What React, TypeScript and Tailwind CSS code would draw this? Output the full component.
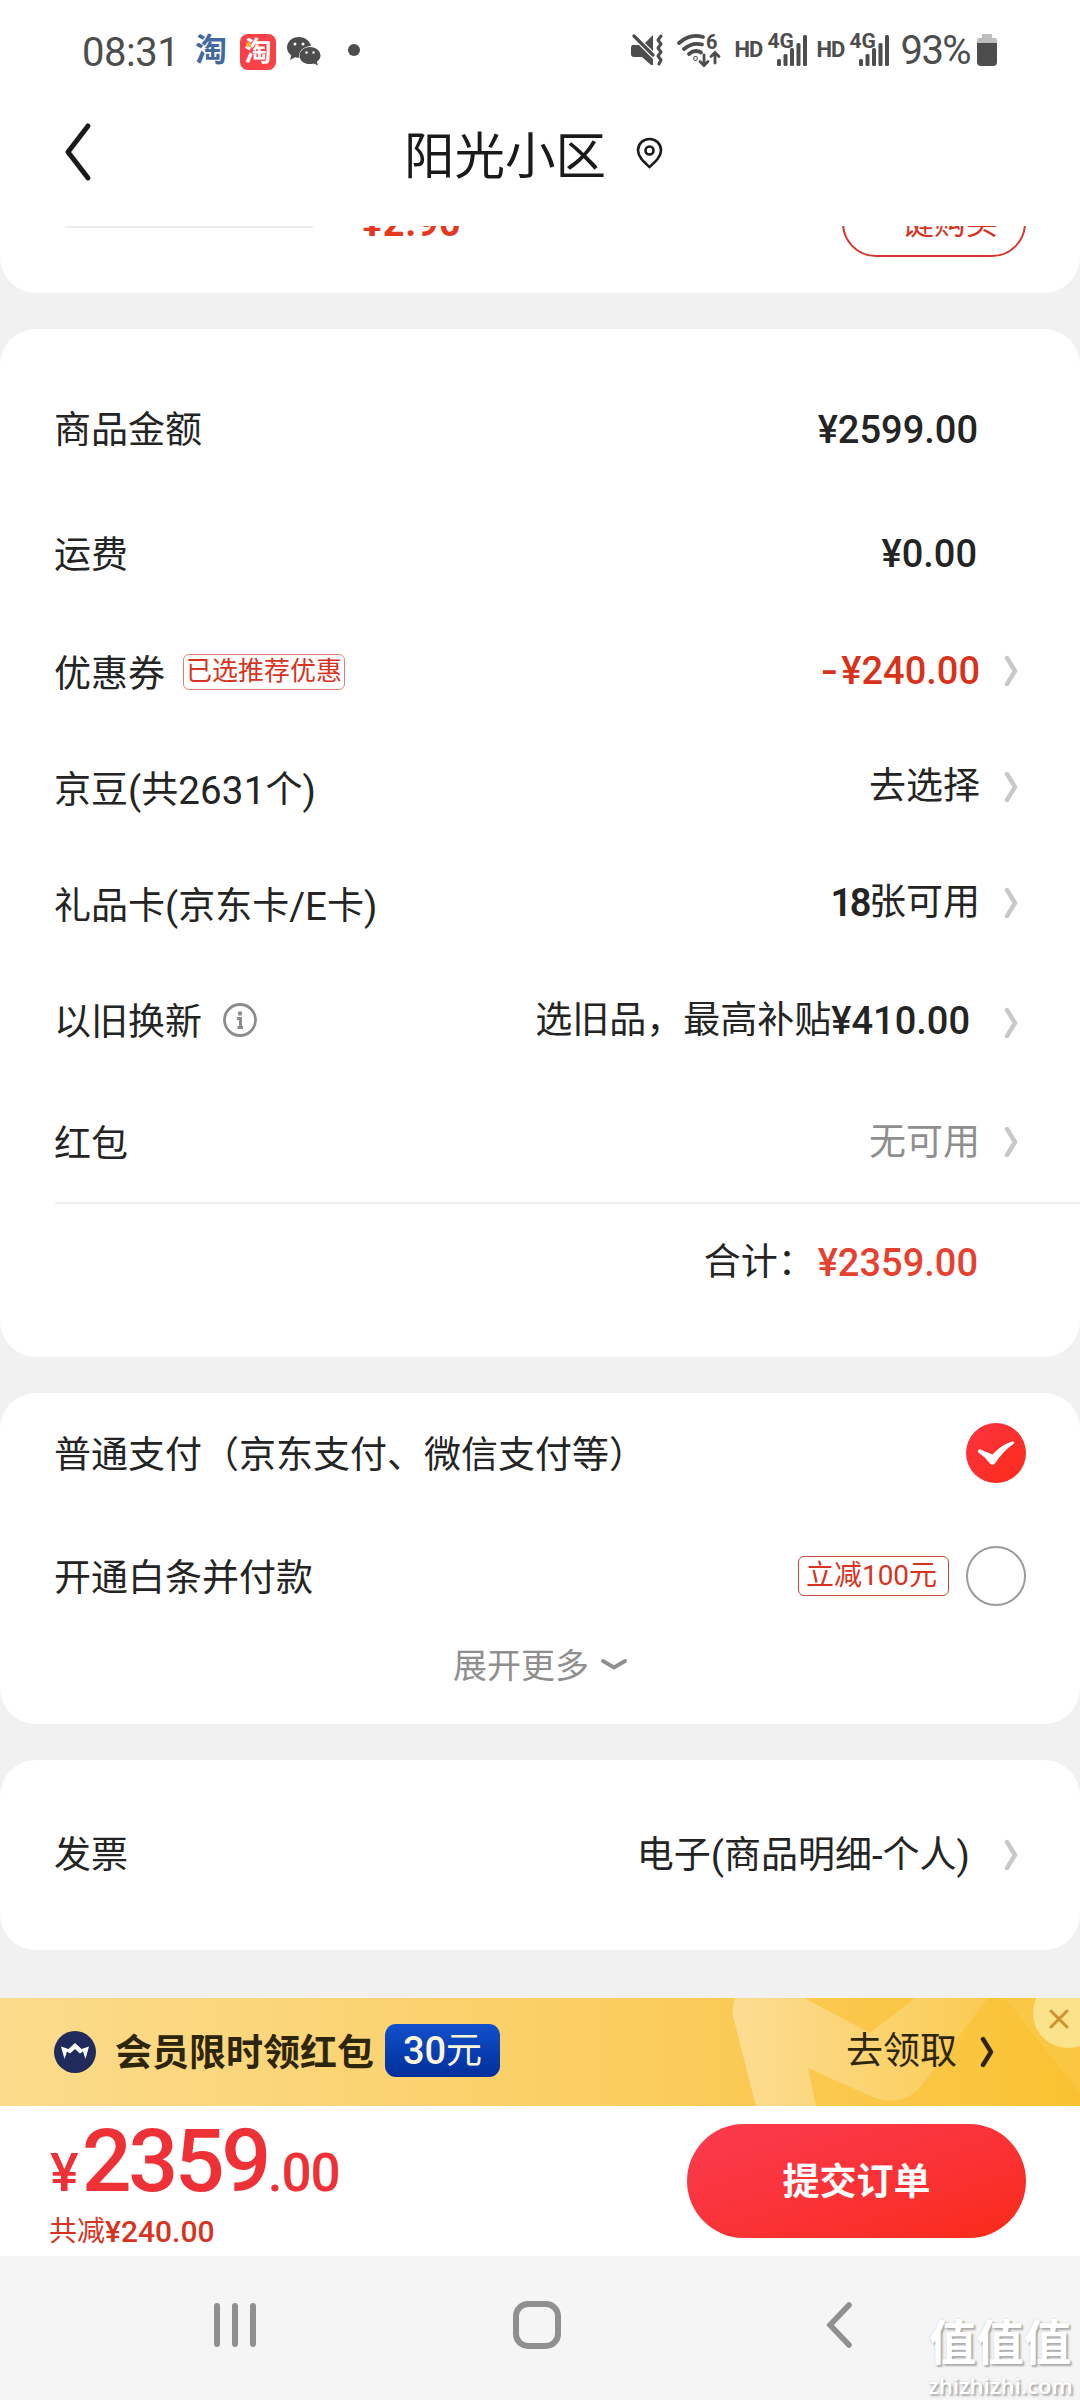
import type { ReactNode } from "react";

function Arrow({ className = "text-[#c8c8c8]" }: { className?: string }) {
  return (
    <svg className={`w-3.5 h-8 shrink-0 ${className}`} viewBox="0 0 14 32" fill="none">
      <path d="M3 3 L11 16 L3 29" stroke="currentColor" strokeWidth="4.400" strokeLinecap="round" strokeLinejoin="round" />
    </svg>
  );
}

function Signal() {
  return (
    <div className="relative flex w-[74px] h-8">
      <span className="mt-[4px] h-6 text-[22px] leading-6 font-bold tracking-[-1px]">HD</span>
      <span className="absolute left-[33px] -top-[3px] text-[21px] leading-5 font-bold">4G</span>
      <svg className="absolute left-[42px] top-0 w-8 h-8" viewBox="0 0 32 32" fill="#4d4d4d">
        <rect x="0" y="25" width="4" height="7" rx="1.5" />
        <rect x="6.5" y="20" width="4" height="12" rx="1.5" />
        <rect x="13" y="14" width="4" height="18" rx="1.5" />
        <rect x="19.5" y="9" width="4" height="23" rx="1.5" />
        <rect x="26" y="1" width="4" height="31" rx="1.5" />
      </svg>
    </div>
  );
}

function StatusBar() {
  return (
    <div className="flex h-[103px] items-start pl-[82px] pr-[83px] pt-[34px] text-[#4d4d4d]">
      <span className="-mt-[3px] w-[113px] text-[40px] leading-[44px] font-normal tracking-[-0.500px]">08:31</span>
      <span className="w-[45px] text-[32px] leading-8 font-bold text-[#44699f]">淘</span>
      <span className="relative flex size-9 items-center justify-center rounded-lg bg-[#fb4148] text-[27px] font-bold text-white">
        淘
        <span className="absolute left-[6px] top-[8px] size-[5px] rounded-full bg-[#ffb01f]" />
      </span>
      <svg className="ml-[11px] mt-[3px] w-[34px] h-7 overflow-visible" viewBox="0 0 34 28" fill="#4d4d4d">
        <path d="M12 0C5 0 0 4.800 0 10.500c0 3.300 1.700 6 4.300 7.900L3 23l5.200-2.700c1.500.4 2.600.5 4 .5C11 14 17 9 24 9 23 4 18 0 12 0Z" />
        <path d="M23 10c-6 0-10.500 4-10.500 8.700S17 27 23 27c1.300 0 2.500-.2 3.600-.6L31 28.500l-1.200-3.700c2.300-1.600 3.700-3.700 3.700-6.100C33.500 14 29 10 23 10Z" />
        <g fill="#fff">
          <circle cx="8" cy="7" r="1.500" /><circle cx="16" cy="7" r="1.500" />
          <circle cx="19.500" cy="15.500" r="1.200" /><circle cx="26.500" cy="15.500" r="1.200" />
        </g>
      </svg>
      <span className="ml-[27px] mt-[10px] size-3 rounded-full bg-[#4d4d4d]" />

      <div className="ml-auto flex">
        <svg className="w-8 h-8" viewBox="0 0 32 32" fill="#4d4d4d">
          <path d="M1 11 H8 L22 25 V31 L20 31 L11 23 H3 Q0 23 0 20 V13Z" />
          <path d="M22 1 V17 L14 9Z" />
          <path d="M3 2 L22 21" stroke="#4d4d4d" strokeWidth="3.200" strokeLinecap="round" />
          <path d="M30 2 L27 6 L30 10 L27 14 L30 18 L27 22 L30 26 L28 30" fill="none" stroke="#4d4d4d" strokeWidth="3" strokeLinecap="round" strokeLinejoin="round" />
        </svg>
        <svg className="ml-[14px] w-[44px] h-[34px] overflow-visible" viewBox="0 0 44 34" fill="none" stroke="#4d4d4d" strokeWidth="3.800" strokeLinecap="round">
          <path d="M2 9 Q13-1 26 3" />
          <path d="M7 15 Q15 8 25 10.500" />
          <path d="M12 20 Q18 15 24 18.500" />
          <circle cx="18.500" cy="24.500" r="0.500" />
          <path d="M27 21 V31 M23 27.500 L27 31.500 L31 27.500 M38 29 V18.500 M34 22.500 L38 18.500 L42 22.500" strokeWidth="2.800" />
          <text x="29" y="14.500" fill="#4d4d4d" stroke="none" fontSize="20" fontWeight="700">6</text>
        </svg>
        <span className="ml-[14px]"><Signal /></span>
        <span className="ml-2"><Signal /></span>
        <span className="-mt-[5px] ml-[10px] text-[40px] leading-[44px] font-normal tracking-[-1.600px]">93%</span>
        <svg className="ml-[7px] w-5 h-8" viewBox="0 0 20 32">
          <path d="M5 0 h10 v4 h3 q2 0 2 3 v5 h-20 v-5 q0-3 2-3 h3z" fill="#bdbdbd" />
          <path d="M0 9 h20 v19 q0 4-4 4 h-12 q-4 0-4-4z" fill="#4d4d4d" />
        </svg>
      </div>
    </div>
  );
}

function Header() {
  return (
    <div className="relative flex h-[123px] justify-center">
      <svg className="absolute left-[62px] top-[18px] w-8 h-[62px]" viewBox="0 0 32 62" fill="none">
        <path d="M26 5 L6 31 L26 57" stroke="#1a1a1a" strokeWidth="5" strokeLinecap="round" strokeLinejoin="round" />
      </svg>
      <h1 className="-ml-[13px] mt-[18px] text-[50.500px] leading-[72px] text-[#1a1a1a]">阳光小区</h1>
      <svg className="ml-[30px] mt-[34px] w-[27px] h-8" viewBox="0 0 27 32" fill="none" stroke="#1a1a1a" strokeWidth="2.600">
        <path d="M13.500 2 C7 2 2 7 2 13.300 C2 20 8 25 13.500 30 C19 25 25 20 25 13.300 C25 7 20 2 13.500 2Z" />
        <circle cx="13.500" cy="13.500" r="4" />
      </svg>
    </div>
  );
}

type RowProps = {
  label: ReactNode;
  value: ReactNode;
  height: string;
  arrow?: boolean;
  valueClass?: string;
  arrowClass?: string;
};

function Row({ label, value, height, arrow, valueClass = "", arrowClass = "" }: RowProps) {
  return (
    <div className={`flex items-center pl-[54px] pr-[62px] ${height}`}>
      <div className="flex items-center pt-[4px]">{label}</div>
      <div className={`ml-auto flex items-center ${valueClass}`}>{value}</div>
      <div className={`flex w-[38px] justify-end ${arrowClass}`}>{arrow && <Arrow />}</div>
    </div>
  );
}

function Price({ children, className = "" }: { children: ReactNode; className?: string }) {
  return <span className={`text-[38px] font-medium ${className}`}>{children}</span>;
}

function Summary() {
  return (
    <section className="mt-9 h-[1028px] rounded-[36px] bg-white pt-[38px]">
      <Row label="商品金额" value={<Price>¥2599.00</Price>} height="h-[124px]" valueClass="pr-[2px] pt-px" />
      <Row label="运费" value={<Price>¥0.00</Price>} height="h-[125px]" valueClass="pr-[3px] pt-px" />
      <Row
        label={
          <>
            优惠券
            <span className="-mt-[7px] ml-[18px] flex h-9 w-[162px] items-center justify-center rounded-md border border-[#d98078] pb-0.5 text-[26px] text-[#d8331f]">
              已选推荐优惠
            </span>
          </>
        }
        value={
          <Price className="flex items-center text-[#d8331a]">
            <span className="inline-block scale-x-130 mr-[5px]">-</span>¥240.00
          </Price>
        }
        height="h-[114px]"
        valueClass="-mt-1"
        arrowClass="-mt-1"
        arrow
      />
      <Row
        label={<>京豆<span className="text-[38.500px]">(</span>共<span className="text-[38.500px] tracking-[0.200px]">2631</span>个<span className="text-[38.500px]">)</span></>}
        value="去选择"
        height="h-[117px]"
        valueClass="-mt-1"
        arrowClass="-mt-1"
        arrow
      />
      <Row
        label={<>礼品卡<span className="text-[38.500px]">(</span>京东卡<span className="text-[38.500px]">/E</span>卡<span className="text-[38.500px]">)</span></>}
        value={<><Price className="tracking-[-2.500px] font-semibold">18</Price>张可用</>}
        height="h-[115px]"
        valueClass="-mt-[3px]"
        arrowClass="-mt-1"
        arrow
      />
      <Row
        label={
          <>
            以旧换新
            <svg className="ml-[20px] -mt-[6px] size-9" viewBox="0 0 36 36" fill="none" stroke="#8c8c8c">
              <circle cx="18" cy="18" r="15.500" strokeWidth="2.800" />
              <path d="M15 16.500 H18.500 V25 M15.500 25.500 H21" strokeWidth="3" />
              <circle cx="18" cy="11.500" r="1" strokeWidth="2.500" />
            </svg>
          </>
        }
        value={<>选旧品，最高补贴<Price>¥410.00</Price></>}
        height="h-[117px]"
        valueClass="mr-[10px]"
        arrowClass="mt-[5px]"
        arrow
      />
      <Row
        label={<span className="pt-1">红包</span>}
        value={<span className="text-[#8f8f8f]">无可用</span>}
        height="h-[123px]"
        valueClass="mt-1"
        arrowClass="mt-[3px]"
        arrow
      />
      <div className="ml-[55px] h-0.5 bg-[#f0f0f0]" />
      <div className="flex h-[118px] items-center justify-end pr-[102px]">
        合计：<Price className="ml-[3px] text-[#e8402f]">¥2359.00</Price>
      </div>
    </section>
  );
}

function Payment() {
  return (
    <section className="mt-9 h-[331px] rounded-[36px] bg-white">
      <div className="flex h-[121px] items-center pl-[54px] pr-[54px]">
        <span className="pt-1">普通支付（京东支付、微信支付等）</span>
        <svg className="-mt-px ml-auto size-[60px]" viewBox="0 0 60 60">
          <defs>
            <linearGradient id="tick" x1="0" x2="1" y1="0" y2="1">
              <stop offset="0" stopColor="#fb3441" />
              <stop offset="1" stopColor="#fc2b18" />
            </linearGradient>
          </defs>
          <circle cx="30" cy="30" r="30" fill="url(#tick)" />
          <path d="M12 27.500 Q13 25.500 15.500 27 L26.500 31.500 Q35 22 46 18.500 Q49 18 48 20.500 Q37 28 29 40.500 Q26.500 43 24 40.500 Q19 34 12.500 29.500 Q11.500 28.500 12 27.500Z" fill="#fff" />
        </svg>
      </div>
      <div className="flex h-[125px] items-center pl-[54px] pr-[54px]">
        <span className="pt-1">开通白条并付款</span>
        <span className="-mt-[2px] ml-auto flex h-10 w-[151px] items-center justify-center rounded-md border-[1.5px] border-[#d2453a] pr-1 text-[28px] text-[#d8331f]">
          立减100元
        </span>
        <span className="-mt-[2px] ml-[17px] size-[60px] rounded-full border-2 border-[#9b9b9b]" />
      </div>
      <div className="flex h-[52px] items-center justify-center text-[34px] text-[#8f8f8f]">
        <span className="pt-[2px]">展开更多</span>
        <svg className="ml-3 w-[26px] h-3" viewBox="0 0 26 12" fill="none">
          <path d="M2 2 L13 8.500 L24 2" stroke="#8f8f8f" strokeWidth="3.800" strokeLinecap="round" />
        </svg>
      </div>
    </section>
  );
}

function Banner() {
  return (
    <div className="relative mt-12 h-[108px] overflow-hidden bg-linear-to-r from-[#fbdc8c] to-[#fac230]">
      <svg className="absolute right-0 top-0 h-[108px] w-[360px]" viewBox="0 0 360 108">
        <defs>
          <linearGradient id="crown" x1="0" x2="1">
            <stop offset="0" stopColor="#fff" stopOpacity="0.350" />
            <stop offset="0.950" stopColor="#fff" stopOpacity="0.120" />
          </linearGradient>
        </defs>
        <path d="M15 0 H84 L150 35 L195 0 H268 L205 83 Q185 112 150 98 L88 70 L96 108 H36 L13 18 Q12 8 15 0Z" fill="url(#crown)" />
        <path d="M285 0 H360 V95Z" fill="#fff" fillOpacity="0.080" />
      </svg>
      <div className="relative flex h-full items-center pl-[54px] pr-[86px] text-[#2d260d]">
        <svg className="size-[42px]" viewBox="0 0 42 42">
          <circle cx="21" cy="21" r="21" fill="#202b5c" />
          <path d="M7 15.500 L14.500 18 L21 12 L27.500 18 L35 15.500 L31.500 28 L29 20.500 L26 22.500 L21 18 L16 22.500 L13 20.500 L10.500 28Z" fill="#fff" />
        </svg>
        <span className="ml-[19px] pt-1 font-bold">会员限时领红包</span>
        <span className="ml-[11px] -mt-[3px] flex h-[53px] w-[115px] items-center justify-center rounded-[11px] bg-linear-to-b from-[#1250cc] to-[#022f9b] text-[#fbf5d8]">
          <Price>30</Price><span className="text-[36px]">元</span>
        </span>
        <span className="-mt-px ml-auto">去领取</span>
        <Arrow className="ml-[23px] text-[#2d260d]" />
      </div>
      <div className="absolute -right-[23px] -top-5 size-[70px] rounded-full bg-[#fbe38b]" />
      <svg className="absolute right-[11px] top-[11px] size-5" viewBox="0 0 20 20">
        <path d="M2 2 L18 18 M18 2 L2 18" stroke="#d09030" strokeWidth="3" strokeLinecap="round" />
      </svg>
    </div>
  );
}

function SubmitBar() {
  return (
    <div className="flex h-[150px] justify-between bg-white pl-[50px] pr-[54px]">
      <div>
        <div className="mt-[11px] flex h-[88px] items-baseline font-medium leading-[88px] text-[#ee3136]">
          <span className="text-[54px]">¥</span>
          <span className="ml-[3px] text-[88px] tracking-[-3.500px]">2359</span>
          <span className="text-[53px] tracking-[-1px]">.00</span>
        </div>
        <div className="-ml-px mt-[7px] flex h-10 items-center text-[28px] text-[#d8331f]">
          共减<span className="text-[30px] font-medium">¥240.00</span>
        </div>
      </div>
      <button className="mt-[18px] h-[114px] w-[339px] rounded-full bg-linear-to-br from-[#fa3a4e] to-[#fa2a14] pt-[3px] font-bold text-white">
        提交订单
      </button>
    </div>
  );
}

function NavBar() {
  return (
    <div className="relative h-36 bg-[#f5f5f5]">
      <div className="flex items-center pl-[213px] pt-[44px]">
        <svg className="w-11 h-[50px]" viewBox="0 0 44 50" stroke="#909090" strokeWidth="6" strokeLinecap="round">
          <path d="M4 6 V44 M22 6 V44 M40 6 V44" />
        </svg>
        <span className="ml-[256px] size-12 rounded-[15px] border-6 border-[#909090]" />
        <svg className="ml-[262px] w-8 h-[50px]" viewBox="0 0 32 50" fill="none">
          <path d="M26 5 L7 25 L26 45" stroke="#909090" strokeWidth="5.500" strokeLinecap="round" />
        </svg>
      </div>
      <div className="absolute bottom-[2px] right-2 w-[144px] text-center text-white [text-shadow:2px_2px_2px_#aaa,0_0_2px_#ccc]">
        <div className="text-[47.500px] leading-[56px] font-bold">值值值</div>
        <div className="font-['Noto_Sans'] text-[22px] leading-[26px] font-semibold">zhizhizhi.com</div>
      </div>
    </div>
  );
}

export default function App() {
  return (
    <div className="h-[2400px] w-[1080px] overflow-hidden bg-[#f1f1f1] font-[Roboto,'Noto_Sans_CJK_SC',sans-serif] text-[37px] leading-[52px] whitespace-nowrap text-[#242424]">
      <div className="bg-white">
        <StatusBar />
        <Header />
      </div>
      {/* bottom of the last product card, scrolled under the header */}
      <section className="flex h-[67px] items-start overflow-hidden rounded-b-[36px] bg-white">
        <span className="ml-[65px] h-0.5 w-[248px] bg-[#ececec]" />
        <span className="-mt-[29px] ml-[49px] text-[38px] font-bold tracking-[0.500px] text-[#e4391f]">¥2.90</span>
        <span className="-mt-[37px] ml-auto mr-[54px] flex h-[68px] w-[184px] items-center justify-center rounded-full border-2 border-[#d2382b] text-[32px] text-[#d8331f]">
          一键购买
        </span>
      </section>
      <Summary />
      <Payment />
      <section className="mt-9 h-[190px] rounded-[36px] bg-white">
        <Row
          label="发票"
          value={<>电子<span className="text-[38.500px]">(</span>商品明细<span className="text-[38.500px]">-</span>个人<span className="text-[38.500px]">)</span></>}
          height="h-[188px]"
          valueClass="mr-[10px] pt-[3px]"
          arrowClass="pt-px"
          arrow
        />
      </section>
      <Banner />
      <SubmitBar />
      <NavBar />
    </div>
  );
}
